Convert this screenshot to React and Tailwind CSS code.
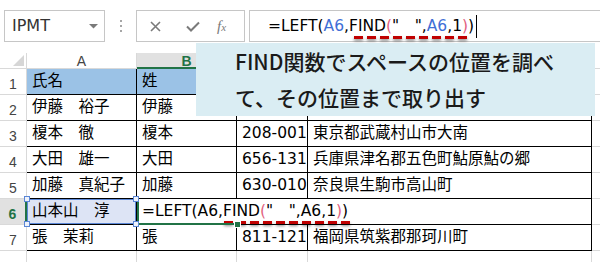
import React from "react";

function Dash({ className }) {
  return (
    <span
      className={
        "absolute h-[3px] bg-[repeating-linear-gradient(90deg,#c00000_0_9px,transparent_9px_13px)] drop-shadow-[0_2px_1.5px_rgba(0,0,0,0.45)] " +
        className
      }
    />
  );
}

function RowHead({ n, active }) {
  return (
    <div
      className={
        "w-[27px] h-full shrink-0 flex items-end justify-center pb-[3px] leading-none text-[14px] font-['Liberation_Sans',sans-serif] border-b border-[#d9d9d9] " +
        (active
          ? "bg-[#e1e1e1] text-[#217346] font-bold border-r-2 border-r-[#217346]"
          : "text-[#444] border-r border-r-[#d9d9d9]")
      }
    >
      {n}
    </div>
  );
}

function Cell({ w, children, fill, className = "" }) {
  return (
    <div
      className={
        "h-full shrink-0 flex items-center pl-[5px] whitespace-nowrap overflow-hidden border-r border-b border-black " +
        w +
        " " +
        (fill ? "bg-[#9bc2e6] " : "") +
        className
      }
    >
      {children}
    </div>
  );
}

function ECell() {
  return <div className="flex-1 h-full border-b border-[#d9d9d9]" />;
}

const rows = [
  { n: 1, a: "氏名", b: "姓", c: "", d: "", fill: true },
  { n: 2, a: "伊藤　裕子", b: "伊藤", c: "", d: "" },
  { n: 3, a: "榎本　徹", b: "榎本", c: "208-001", d: "東京都武蔵村山市大南" },
  { n: 4, a: "大田　雄一", b: "大田", c: "656-131", d: "兵庫県津名郡五色町鮎原鮎の郷" },
  { n: 5, a: "加藤　真紀子", b: "加藤", c: "630-010", d: "奈良県生駒市高山町" },
  { n: 6 },
  { n: 7, a: "張　茉莉", b: "張", c: "811-121", d: "福岡県筑紫郡那珂川町" },
];

function Handle({ pos }) {
  return (
    <span
      className={
        "absolute w-[6px] h-[6px] bg-[#eef2fb] border border-[#5b87d6] z-20 " + pos
      }
    />
  );
}

export default function App() {
  return (
    <div className="relative w-[600px] h-[262px] overflow-hidden bg-white text-black font-['DejaVu_Sans','Noto_Sans_CJK_JP',sans-serif]">
      {/* formula bar */}
      <div className="flex h-[32px] mt-[10px]">
        <div className="ml-[4px] w-[101px] h-full shrink-0 border border-[#c6c6c6] flex items-center justify-between pl-[7px] pr-[6px]">
          <span className="text-[16px] text-[#333] leading-none">IPMT</span>
          <svg width="9" height="5" viewBox="0 0 9 5">
            <path d="M0 0 H9 L4.5 4.5 Z" fill="#7a7a7a" />
          </svg>
        </div>
        <div className="w-[31px] shrink-0 flex flex-col items-center justify-center gap-[3px]">
          <span className="w-[2px] h-[2px] bg-[#a6a6a6]" />
          <span className="w-[2px] h-[2px] bg-[#a6a6a6]" />
          <span className="w-[2px] h-[2px] bg-[#a6a6a6]" />
        </div>
        <div className="w-[109px] h-full shrink-0 border border-[#c6c6c6] flex items-center">
          <svg className="ml-[13px]" width="11" height="11" viewBox="0 0 11 11">
            <path d="M1 1 L10 10 M10 1 L1 10" stroke="#7a7a7a" strokeWidth="1.6" />
          </svg>
          <svg className="ml-[25px]" width="14" height="11" viewBox="0 0 14 11">
            <path d="M1 5.5 L5 9.5 L13 1.5" stroke="#7a7a7a" strokeWidth="2" fill="none" />
          </svg>
          <span className="ml-[17px] italic text-[#7a7a7a] font-['Liberation_Serif',serif] leading-none">
            <span className="text-[15px]">f</span>
            <span className="text-[11px]">x</span>
          </span>
        </div>
        <div className="ml-[4px] w-[400px] h-full shrink-0 border border-[#c6c6c6] flex items-center pl-[18px] text-[15.5px] leading-[18px]">
          <span>=LEFT(</span>
          <span className="text-[#3f6fd6]">A6</span>
          <span>,</span>
          <span className="relative">
            FIND<span className="text-[#e2627f]">(</span>"　",
            <span className="text-[#3f6fd6]">A6</span>,1
            <span className="text-[#e2627f]">)</span>
            <Dash className="left-[5px] right-[-2px] top-[19px]" />
          </span>
          <span>)</span>
          <span className="ml-[2px] w-[1px] h-[23px] bg-black" />
        </div>
      </div>

      {/* grid */}
      <div className="mt-[11px] text-[15.5px]">
        {/* column headers */}
        <div className="flex h-[16px] text-[14px] leading-none font-['Liberation_Sans',sans-serif] text-[#444]">
          <div className="relative w-[27px] shrink-0 h-full border-r border-b border-[#d9d9d9]">
            <svg className="absolute right-[2px] bottom-[2px]" width="11" height="11" viewBox="0 0 11 11">
              <path d="M11 0 V11 H0 Z" fill="#d6d6d6" />
            </svg>
          </div>
          <div className="w-[110px] shrink-0 h-full border-r border-b border-[#d9d9d9] flex items-center justify-center">
            A
          </div>
          <div className="w-[100px] shrink-0 h-full bg-[#e1e1e1] border-r border-[#d9d9d9] border-b-2 border-b-[#217346] flex items-center justify-center pt-[1px] text-[#217346] font-bold">
            B
          </div>
          <div className="w-[71px] shrink-0 h-full border-r border-b border-[#d9d9d9]" />
          <div className="w-[284px] shrink-0 h-full border-r border-b border-[#d9d9d9]" />
          <div className="flex-1 h-full border-b border-[#d9d9d9]" />
        </div>

        {rows.map((r) =>
          r.n === 6 ? (
            <div key={r.n} className="flex h-[26px]">
              <RowHead n={6} active />
              <div className="relative w-[110px] h-full shrink-0 flex items-center pl-[5px] whitespace-nowrap bg-[#dde4f5] border-r border-b border-black">
                山本山　淳
                <span className="absolute inset-0 border border-[#5b87d6] pointer-events-none" />
                <Handle pos="left-[-3px] top-[-3px]" />
                <Handle pos="right-[-3px] top-[-3px]" />
                <Handle pos="left-[-3px] bottom-[-3px]" />
                <Handle pos="right-[-3px] bottom-[-3px]" />
              </div>
              <div className="relative w-[100px] h-full shrink-0 flex items-center pl-[5px] whitespace-nowrap border-b border-black z-10">
                <span>=LEFT(A6,</span>
                <span className="relative">
                  FIND<span className="text-[#e2627f]">(</span>"　",A6,1
                  <span className="text-[#e2627f]">)</span>)
                  <Dash className="left-[1px] right-[-6px] top-[21px]" />
                </span>
                <span className="absolute left-0 top-0 bottom-0 w-[2px] bg-[#217346]" />
                <span className="absolute left-0 right-0 bottom-[-1px] h-[2px] bg-[#217346]" />
                <span className="absolute right-[-4px] bottom-[-4px] w-[7px] h-[7px] bg-[#217346] border border-white" />
              </div>
              <div className="w-[71px] h-full shrink-0 border-b border-black" />
              <div className="w-[284px] h-full shrink-0 border-r border-b border-black" />
              <ECell />
            </div>
          ) : (
            <div key={r.n} className="flex h-[26px]">
              <RowHead n={r.n} />
              <Cell w="w-[110px]" fill={r.fill}>
                {r.a}
              </Cell>
              <Cell w="w-[100px]" fill={r.fill}>
                {r.b}
              </Cell>
              <Cell w="w-[71px]" fill={r.fill} className="pl-[3px]">
                {r.c}
              </Cell>
              <Cell w="w-[284px]" fill={r.fill}>
                {r.d}
              </Cell>
              <ECell />
            </div>
          )
        )}

        {/* row 8 */}
        <div className="flex h-[26px]">
          <div className="w-[27px] h-full shrink-0 border-r border-[#d9d9d9]" />
          <div className="w-[110px] h-full shrink-0 border-r border-[#d9d9d9]" />
          <div className="w-[100px] h-full shrink-0 border-r border-[#d9d9d9]" />
          <div className="w-[71px] h-full shrink-0 border-r border-[#d9d9d9]" />
          <div className="w-[284px] h-full shrink-0 border-r border-[#d9d9d9]" />
          <div className="flex-1" />
        </div>
      </div>

      {/* callout */}
      <div className="absolute left-[196px] top-[43px] w-[399px] h-[73px] bg-[#daedf3] pl-[39px] font-['Noto_Sans_CJK_JP',sans-serif] font-medium text-[21px] leading-[36px] text-[#1a1a1a]">
        <div>FIND関数でスペースの位置を調べ</div>
        <div>て、その位置まで取り出す</div>
      </div>
    </div>
  );
}
